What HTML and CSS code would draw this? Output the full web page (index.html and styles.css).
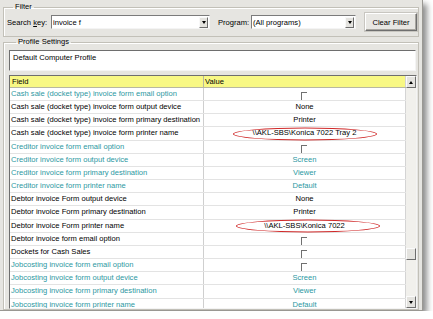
FILE: index.html
```html
<!DOCTYPE html>
<html>
<head>
<meta charset="utf-8">
<link rel="stylesheet" href="styles.css">
</head>
<body>
<div class="dialog">
  <fieldset class="group filter">
    <legend>Filter</legend>
    <div class="filter-row">
      <label class="lbl lbl-search">Search <u>k</u>ey:</label>
      <div class="combo combo-search"><span class="combo-text">invoice f</span><span class="drop"><span class="tri"></span></span></div>
      <label class="lbl lbl-program">Program:</label>
      <div class="combo combo-program"><span class="combo-text">(All programs)</span><span class="drop"><span class="tri"></span></span></div>
      <button class="btn">Clear Filter</button>
    </div>
  </fieldset>
  <fieldset class="group profile">
    <legend>Profile Settings</legend>
    <div class="profile-name">Default Computer Profile</div>
    <div class="grid">
      <div class="grid-main">
        <div class="row head"><div class="c-field">Field</div><div class="c-value c-value-head">Value</div></div>
        <div class="row teal"><div class="c-field">Cash sale (docket type) invoice form email option</div><div class="c-value"><span class="chk"></span></div></div>
        <div class="row"><div class="c-field">Cash sale (docket type) invoice form output device</div><div class="c-value">None</div></div>
        <div class="row"><div class="c-field">Cash sale (docket type) invoice form primary destination</div><div class="c-value">Printer</div></div>
        <div class="row"><div class="c-field">Cash sale (docket type) invoice form printer name</div><div class="c-value">\\AKL-SBS\Konica 7022 Tray 2<span class="ring"></span></div></div>
        <div class="row teal"><div class="c-field">Creditor invoice form email option</div><div class="c-value"><span class="chk"></span></div></div>
        <div class="row teal"><div class="c-field">Creditor invoice form output device</div><div class="c-value">Screen</div></div>
        <div class="row teal"><div class="c-field">Creditor invoice form primary destination</div><div class="c-value">Viewer</div></div>
        <div class="row teal"><div class="c-field">Creditor invoice form printer name</div><div class="c-value">Default</div></div>
        <div class="row"><div class="c-field">Debtor invoice Form output device</div><div class="c-value">None</div></div>
        <div class="row"><div class="c-field">Debtor invoice Form primary destination</div><div class="c-value">Printer</div></div>
        <div class="row"><div class="c-field">Debtor invoice Form printer name</div><div class="c-value">\\AKL-SBS\Konica 7022<span class="ring ring-b"></span></div></div>
        <div class="row"><div class="c-field">Debtor invoice form email option</div><div class="c-value"><span class="chk"></span></div></div>
        <div class="row"><div class="c-field">Dockets for Cash Sales</div><div class="c-value"><span class="chk"></span></div></div>
        <div class="row teal"><div class="c-field">Jobcosting invoice form email option</div><div class="c-value"><span class="chk"></span></div></div>
        <div class="row teal"><div class="c-field">Jobcosting invoice form output device</div><div class="c-value">Screen</div></div>
        <div class="row teal"><div class="c-field">Jobcosting invoice form primary destination</div><div class="c-value">Viewer</div></div>
        <div class="row teal"><div class="c-field">Jobcosting invoice form printer name</div><div class="c-value">Default</div></div>
      </div>
      <div class="vscroll">
        <div class="sbtn"><span class="tri-up"></span></div>
        <div class="track"><div class="thumb"></div></div>
        <div class="sbtn"><span class="tri"></span></div>
      </div>
    </div>
  </fieldset>
</div>
</body>
</html>
```
FILE: styles.css
```css
html, body {
  margin: 0;
  padding: 0;
  background: #ffffff;
}
body {
  font-family: "Liberation Sans", Arial, sans-serif;
  font-size: 7.6px;
  color: #000;
}
.dialog {
  width: 422px;
  height: 310px;
  background: #e6e5e1;
  border-right: 1px solid #9a9893;
  border-bottom: 1px solid #9a9893;
  box-shadow: 4px 4px 6px rgba(0, 0, 0, 0.45);
  overflow: hidden;
  display: flex;
  flex-direction: column;
}
.group {
  margin: 0 3px;
  border: 1px solid #c2c0b8;
  box-shadow: inset 1px 1px 0 #ffffff;
  min-width: 0;
}
.group legend {
  padding: 0 2px;
  line-height: 10px;
  height: 10px;
}
.filter {
  margin-top: 2px;
  padding: 1px 1px 5px 3px;
}
.filter legend {
  margin-left: 6px;
}
.filter-row {
  display: flex;
  align-items: center;
  height: 18px;
}
.lbl {
  white-space: nowrap;
}
.lbl-search {
  width: 44px;
}
.lbl-program {
  width: 33px;
  margin-left: 8px;
}
.combo {
  height: 14px;
  box-sizing: border-box;
  background: #fff;
  border: 1px solid;
  border-color: #7b7b7b #f4f4f4 #f4f4f4 #7b7b7b;
  display: flex;
  align-items: center;
  justify-content: space-between;
}
.combo-search {
  width: 159px;
}
.combo-program {
  width: 105px;
}
.combo-text {
  padding-left: 1px;
  white-space: nowrap;
}
.drop {
  width: 9px;
  height: 11px;
  margin-right: 1px;
  box-sizing: border-box;
  background: #e4e3df;
  border: 1px solid;
  border-color: #f8f8f8 #6d6d6d #6d6d6d #f8f8f8;
  display: flex;
  align-items: center;
  justify-content: center;
}
.tri {
  width: 0;
  height: 0;
  border-left: 2.5px solid transparent;
  border-right: 2.5px solid transparent;
  border-top: 3px solid #000;
}
.tri-up {
  width: 0;
  height: 0;
  border-left: 2.5px solid transparent;
  border-right: 2.5px solid transparent;
  border-bottom: 3px solid #000;
}
.btn {
  margin-left: 9px;
  width: 52px;
  height: 18px;
  padding: 0;
  font: inherit;
  color: #000;
  background: #e8e7e3;
  border: 1px solid;
  border-color: #ffffff #6f6f6f #6f6f6f #ffffff;
  box-shadow: inset -1px -1px 0 #a8a6a0, 0 0 0 1px #c8c6c0;
}
.profile {
  padding: 0 2px 0 5px;
  flex: none;
}
.profile legend {
  margin-left: 7px;
}
.profile-name {
  margin-top: 3px;
  height: 21px;
  box-sizing: border-box;
  background: #fff;
  border: 1px solid;
  border-color: #6e6e6e #f4f4f4 #f4f4f4 #6e6e6e;
  padding: 2px 3px 0;
  line-height: 9px;
}
.grid {
  margin-top: 4px;
  width: 408px;
  height: 234px;
  box-sizing: border-box;
  border: 1px solid;
  border-color: #6e6e6e #f4f4f4 #f4f4f4 #6e6e6e;
  background: #fff;
  display: flex;
  overflow: hidden;
}
.grid-main {
  width: 396px;
  flex: none;
  display: flex;
  flex-direction: column;
}
.row {
  flex: none;
  height: 13.17px;
  box-sizing: border-box;
  display: grid;
  grid-template-columns: 194px 202px;
  border-bottom: 1px solid #e3e3e3;
  line-height: 12px;
  white-space: nowrap;
}
.row.head {
  height: 12px;
  background: #f8f884;
  border-bottom: 1px solid #b8b8a0;
  line-height: 11px;
}
.c-field {
  padding-left: 1px;
  border-right: 1px solid #cfcfcf;
  overflow: hidden;
}
.head .c-field {
  padding-left: 2px;
  border-right-color: #b8b8a0;
}
.c-value {
  position: relative;
  display: flex;
  justify-content: center;
  border-right: 1px solid #d4d4d4;
}
.c-value-head {
  justify-content: flex-start;
  padding-left: 1px;
}
.teal {
  color: #2c98a2;
}
.chk {
  width: 6px;
  height: 8px;
  margin-top: 4px;
  margin-left: -2px;
  box-sizing: border-box;
  border-top: 1px solid #707070;
  border-left: 1px solid #707070;
}
.ring {
  position: absolute;
  left: 50%;
  top: 50%;
  width: 144px;
  height: 13px;
  box-sizing: border-box;
  transform: translate(-50%, -50%);
  border: 1.5px solid #d02a2a;
  border-radius: 50%;
}
.ring-b {
  margin-left: 3px;
}
.vscroll {
  width: 10px;
  flex: none;
  display: flex;
  flex-direction: column;
  background: #f1f0ec;
}
.sbtn {
  height: 12px;
  flex: none;
  box-sizing: border-box;
  background: #e4e3df;
  border: 1px solid;
  border-color: #fbfbfb #6d6d6d #6d6d6d #fbfbfb;
  display: flex;
  align-items: center;
  justify-content: center;
}
.track {
  flex: 1;
}
.thumb {
  margin-top: 160px;
  height: 12px;
  box-sizing: border-box;
  background: #e4e3df;
  border: 1px solid;
  border-color: #fbfbfb #6d6d6d #6d6d6d #fbfbfb;
}
```
